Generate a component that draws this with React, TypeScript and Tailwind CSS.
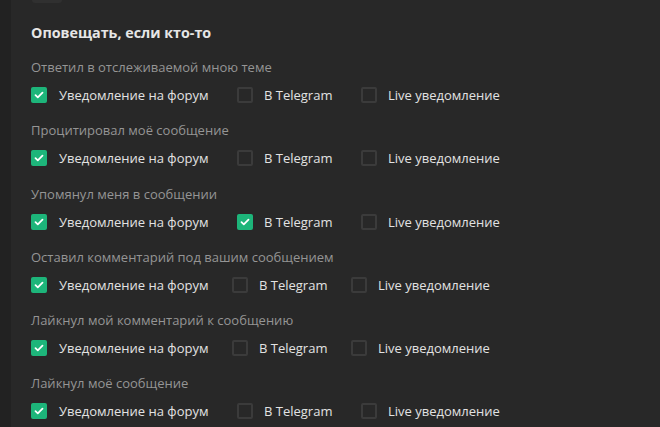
const groups = [
  { title: "Ответил в отслеживаемой мною теме", checks: [true, false, false], gap: "gap-[28.5px]" },
  { title: "Процитировал моё сообщение", checks: [true, false, false], gap: "gap-[28.5px]" },
  { title: "Упомянул меня в сообщении", checks: [true, true, false], gap: "gap-[28.5px]" },
  { title: "Оставил комментарий под вашим сообщением", checks: [true, false, false], gap: "gap-[23.5px]" },
  { title: "Лайкнул мой комментарий к сообщению", checks: [true, false, false], gap: "gap-[23.5px]" },
  { title: "Лайкнул моё сообщение", checks: [true, false, false], gap: "gap-[28.5px]" },
];

const labels = ["Уведомление на форум", "В Telegram", "Live уведомление"];

const Check = ({ on }: { on: boolean }) =>
  on ? (
    <span className="flex h-4 w-4 shrink-0 items-center justify-center rounded-[2px] bg-[#1db57a]">
      <svg width="10" height="8" viewBox="0 0 10 8" fill="none">
        <path d="M1.5 4.2 3.8 6.3 8.5 1.7" stroke="white" strokeWidth="1.8" strokeLinecap="round" strokeLinejoin="round" />
      </svg>
    </span>
  ) : (
    <span className="h-4 w-4 shrink-0 rounded-[2px] border-2 border-[#3b3b3b]" />
  );

export default function App() {
  return (
    <div className="flex h-[427px] w-full overflow-hidden bg-[#282828]" style={{ fontFamily: '"Open Sans", "Noto Sans", sans-serif' }}>
      <div className="w-[11px] shrink-0 bg-[#222222]" />
      <div className="flex-1 pl-[20px]">
        <div className="ml-[1px] h-[3px] w-[30px] rounded-b-[4px] bg-[#303030]" />
        <h2 className="mt-[20px] text-[14.3px] font-bold leading-[20px] text-[#e6e6e6]">Оповещать, если кто-то</h2>
        <div className="mt-[14px] flex flex-col">
          {groups.map((g) => (
            <div key={g.title} className="flex h-[63.3px] flex-col">
              <div className="mt-[1px] text-[13px] leading-[18px] text-[#959595]">{g.title}</div>
              <div className={`mt-[10px] flex items-center ${g.gap}`}>
                {labels.map((l, i) => (
                  <label key={l} className={`flex items-center text-[13px] leading-[18px] text-[#e2e2e2] ${i === 0 ? "gap-[12px]" : "gap-[11px]"}`}>
                    <Check on={g.checks[i]} />
                    {l}
                  </label>
                ))}
              </div>
            </div>
          ))}
        </div>
      </div>
    </div>
  );
}
